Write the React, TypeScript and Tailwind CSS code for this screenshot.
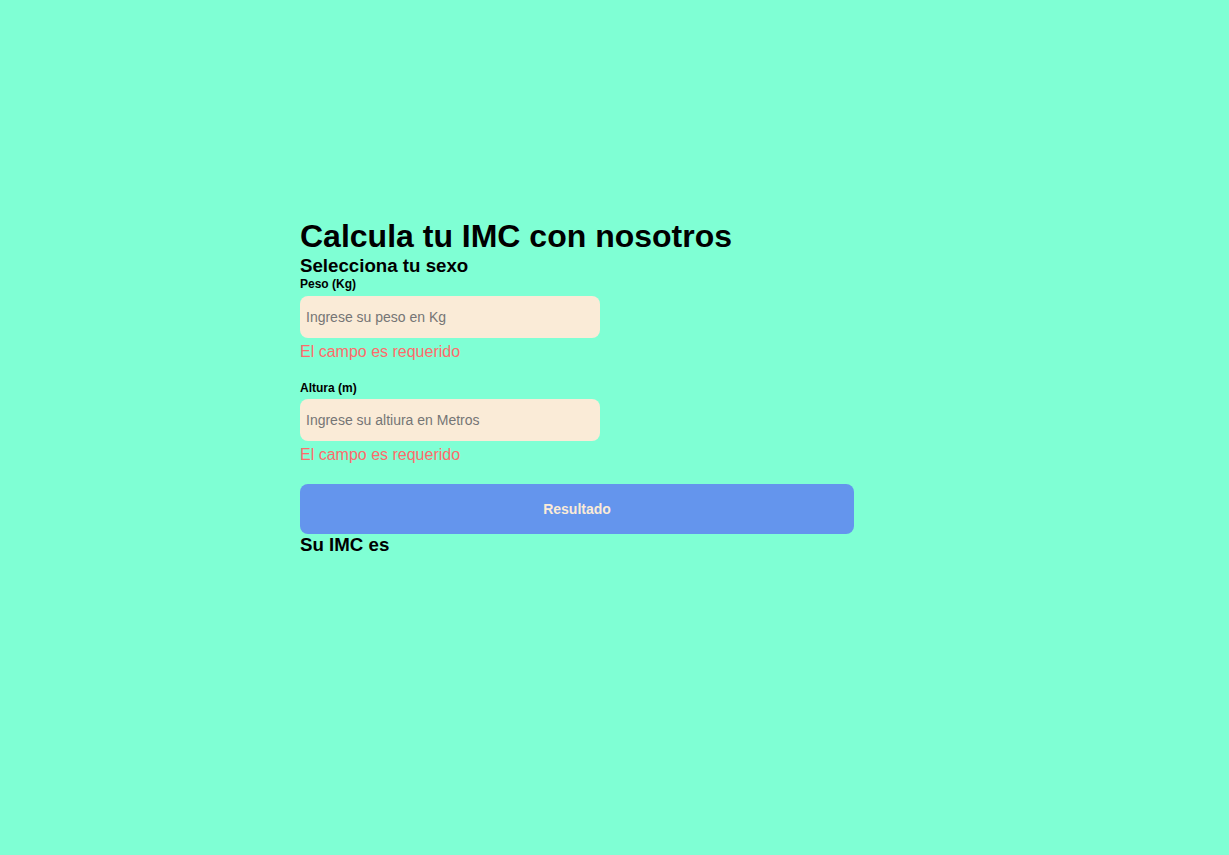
import React from "react";

export default function App() {
  return (
    <div
      className="min-h-[855px] w-full bg-[#7fffd4] text-black"
      style={{ fontFamily: '"Liberation Sans", Arial, sans-serif' }}
    >
      <div className="flex flex-col items-start pl-[300px] pt-[218px]">
        <h1 className="text-[32px] font-bold leading-[37px]">Calcula tu IMC con nosotros</h1>
        <h3 className="text-[18.7px] font-bold leading-[22px]">Selecciona tu sexo</h3>
        <label className="text-[12px] font-bold leading-[14px]">Peso (Kg)</label>
        <input
          className="mt-[5px] h-[42px] w-[300px] rounded-[8px] bg-[#faebd7] px-[6px] text-[14px] placeholder:text-[#757575] outline-none"
          placeholder="Ingrese su peso en Kg"
        />
        <p className="mt-[4px] text-[16px] leading-[20px] text-[#ff6b6b]">El campo es requerido</p>
        <label className="mt-[19px] text-[12px] font-bold leading-[14px]">Altura (m)</label>
        <input
          className="mt-[4px] h-[42px] w-[300px] rounded-[8px] bg-[#faebd7] px-[6px] text-[14px] placeholder:text-[#757575] outline-none"
          placeholder="Ingrese su altiura en Metros"
        />
        <p className="mt-[4px] text-[16px] leading-[20px] text-[#ff6b6b]">El campo es requerido</p>
        <button className="mt-[19px] h-[50px] w-[554px] rounded-[8px] bg-[#6495ed] text-[14px] font-bold text-[#faebd7]">
          Resultado
        </button>
        <h3 className="text-[18.7px] font-bold leading-[22px]">Su IMC es</h3>
      </div>
    </div>
  );
}
